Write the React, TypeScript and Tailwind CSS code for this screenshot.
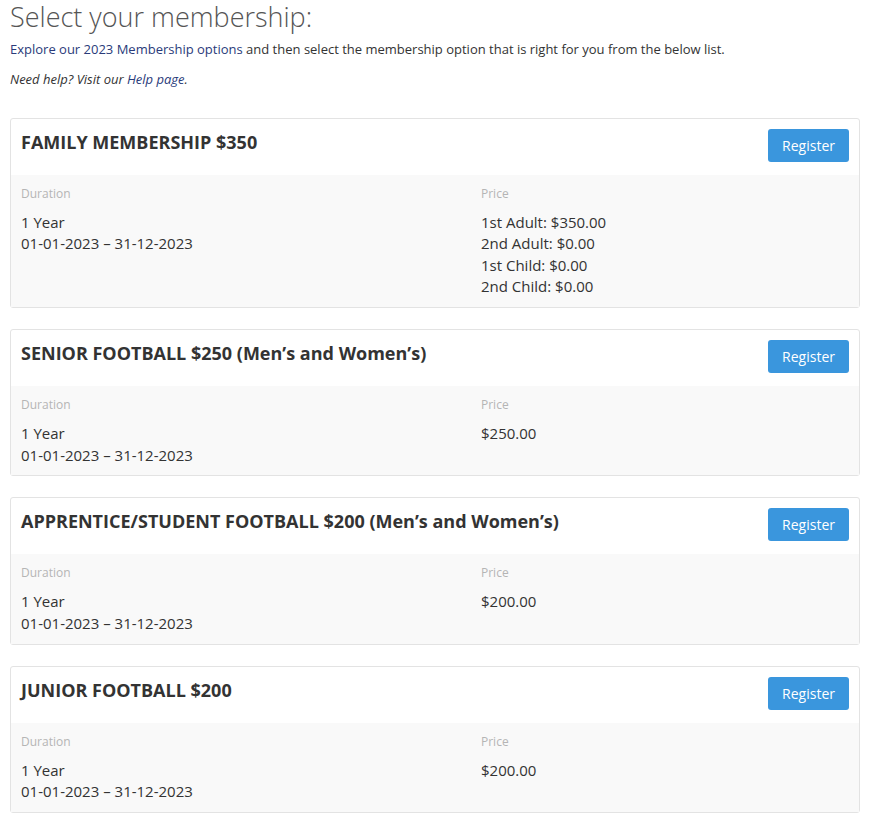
import React from 'react';

interface Membership {
  id: number;
  title: string;
  duration: string;
  period: string;
  prices: string[];
}

const memberships: Membership[] = [
  {
    id: 1,
    title: 'FAMILY MEMBERSHIP $350',
    duration: '1 Year',
    period: '01-01-2023 – 31-12-2023',
    prices: ['1st Adult: $350.00', '2nd Adult: $0.00', '1st Child: $0.00', '2nd Child: $0.00']
  },
  {
    id: 2,
    title: 'SENIOR FOOTBALL $250 (Men’s and Women’s)',
    duration: '1 Year',
    period: '01-01-2023 – 31-12-2023',
    prices: ['$250.00']
  },
  {
    id: 3,
    title: 'APPRENTICE/STUDENT FOOTBALL $200 (Men’s and Women’s)',
    duration: '1 Year',
    period: '01-01-2023 – 31-12-2023',
    prices: ['$200.00']
  },
  {
    id: 4,
    title: 'JUNIOR FOOTBALL $200',
    duration: '1 Year',
    period: '01-01-2023 – 31-12-2023',
    prices: ['$200.00']
  }
];

const MembershipCard: React.FC<{ membership: Membership }> = ({ membership }) => (
  <div className="mb-[21px] border border-[#e3e3e3] rounded-[3px] bg-white">
    {/* Header */}
    <div className="flex items-start justify-between h-[56px] pl-[10px] pr-[10px] pt-[10px]">
      <h2 className="text-[18px] leading-[26px] font-bold text-[#333]">{membership.title}</h2>
      <button
        type="button"
        className="h-[33px] px-[14px] rounded-[3px] bg-[#3a96dd] text-white text-[14px]"
      >
        Register
      </button>
    </div>

    {/* Details */}
    <div className="flex bg-[#f9f9f9] px-[10px] pt-[11px] pb-[9.5px]">
      <div className="w-[460px]">
        <div className="text-[12px] leading-[16px] text-[#b5b5b5]">Duration</div>
        <div className="mt-[10px] text-[15px] leading-[21.4px] text-[#333]">
          <div>{membership.duration}</div>
          <div>{membership.period}</div>
        </div>
      </div>
      <div className="flex-1">
        <div className="text-[12px] leading-[16px] text-[#b5b5b5]">Price</div>
        <div className="mt-[10px] text-[15px] leading-[21.4px] text-[#333]">
          {membership.prices.map(p => (
            <div key={p}>{p}</div>
          ))}
        </div>
      </div>
    </div>
  </div>
);

export default function App() {
  return (
    <div className="w-[880px] bg-white px-[10px] font-['Open_Sans',sans-serif]">
      <div className="w-[850px]">
        <h1 className="pt-[1px] text-[27px] leading-[32px] font-light text-[#555]">Select your membership:</h1>
        <p className="mt-[6px] text-[13px] leading-[20px] text-[#333]">
          <a href="#" className="text-[#2a3b7a]">Explore our 2023 Membership options</a> and then select the
          membership option that is right for you from the below list.
        </p>
        <p className="mt-[10px] text-[13px] leading-[20px] italic text-[#333]">
          Need help? Visit our <a href="#" className="text-[#2a3b7a]">Help page</a>.
        </p>

        <div className="mt-[29px]">
          {memberships.map(m => (
            <MembershipCard key={m.id} membership={m} />
          ))}
        </div>
      </div>
    </div>
  );
}
